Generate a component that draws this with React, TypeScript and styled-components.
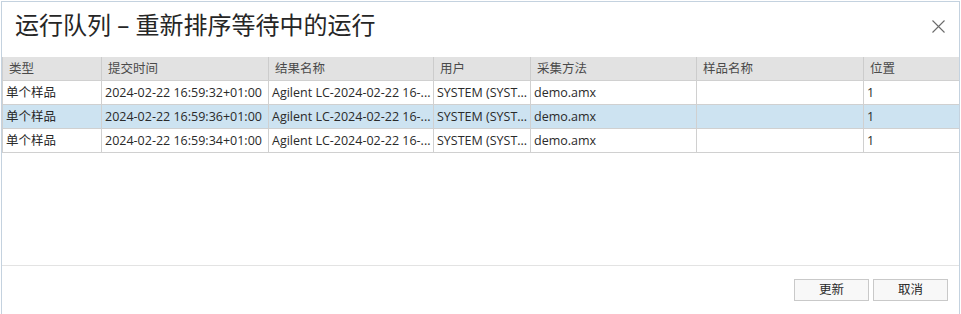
import React from "react";
import styled, { createGlobalStyle } from "styled-components";

const Global = createGlobalStyle`
  html, body { margin: 0; padding: 0; background: #ffffff; }
  body { font-family: "Open Sans", "Noto Sans CJK SC", sans-serif; overflow: hidden; }
  * { box-sizing: border-box; }
`;

const Dialog = styled.div`
  margin: 1px 0 0 1px;
  width: 959px;
  height: 313px;
  border: 1px solid #c4d2df;
  border-bottom: none;
  background: #ffffff;
  display: flex;
  flex-direction: column;
`;

const TitleBar = styled.div`
  height: 55px;
  display: flex;
  align-items: flex-start;
  justify-content: space-between;
  padding: 7px 14px 0 13px;
`;

const Title = styled.h1`
  margin: 0;
  font-size: 24px;
  font-weight: 400;
  line-height: 31px;
  color: #262626;
`;

const CloseButton = styled.button`
  margin-top: 10px;
  width: 14px;
  height: 14px;
  padding: 0;
  border: none;
  background: transparent;
  display: flex;
  align-items: center;
  justify-content: center;
`;

const TableArea = styled.div`
  height: 209px;
  border-bottom: 1px solid #e3e3e3;
  display: flex;
  flex-direction: column;
`;

const cols = "99px 167px 165px 97px 166px 167px 1fr";

const HeaderRow = styled.div`
  display: grid;
  grid-template-columns: ${cols};
  height: 24px;
  background: #e2e2e2;
  border-left: 1px solid #cfcfcf;
  border-bottom: 1px solid #d0d0d0;
`;

const HeaderCell = styled.div`
  padding-left: 6px;
  line-height: 23px;
  font-size: 12.5px;
  color: #4a4a4a;
  border-right: 1px solid #cccccc;
  white-space: nowrap;
  overflow: hidden;
  &:last-child { border-right: none; }
`;

const Row = styled.div<{ $selected?: boolean }>`
  display: grid;
  grid-template-columns: ${cols};
  height: 24px;
  background: ${(p) => (p.$selected ? "#cde3f1" : "#ffffff")};
  border-left: 1px solid #d0d0d0;
  border-bottom: 1px solid #d0d0d0;
`;

const Cell = styled.div`
  padding-left: 3px;
  line-height: 23px;
  font-size: 12.5px;
  color: #2a2a2a;
  border-right: 1px solid #d0d0d0;
  white-space: nowrap;
  overflow: hidden;
  &:last-child { border-right: none; }
`;

const Footer = styled.div`
  display: flex;
  justify-content: flex-end;
  gap: 4px;
  padding: 13px 11px 0 0;
`;

const Button = styled.button`
  width: 75px;
  height: 22px;
  padding: 0;
  border: 1px solid #c9c9c9;
  background: #f8f8f8;
  font-family: "Open Sans", "Noto Sans CJK SC", sans-serif;
  font-size: 12.5px;
  color: #2a2a2a;
  line-height: 20px;
`;

const headers = ["类型", "提交时间", "结果名称", "用户", "采集方法", "样品名称", "位置"];

const rows = [
  { time: "2024-02-22 16:59:32+01:00", selected: false },
  { time: "2024-02-22 16:59:36+01:00", selected: true },
  { time: "2024-02-22 16:59:34+01:00", selected: false },
];

export default function App() {
  return (
    <>
      <Global />
      <Dialog>
        <TitleBar>
          <Title>运行队列 – 重新排序等待中的运行</Title>
          <CloseButton aria-label="关闭">
            <svg width="13" height="13" viewBox="0 0 13 13">
              <path d="M0.5 0.5 L12.5 12.5 M12.5 0.5 L0.5 12.5" stroke="#6b6b6b" strokeWidth="1.1" fill="none" />
            </svg>
          </CloseButton>
        </TitleBar>
        <TableArea>
          <HeaderRow>
            {headers.map((h) => (
              <HeaderCell key={h}>{h}</HeaderCell>
            ))}
          </HeaderRow>
          {rows.map((r) => (
            <Row key={r.time} $selected={r.selected}>
              <Cell>单个样品</Cell>
              <Cell>{r.time}</Cell>
              <Cell>Agilent LC-2024-02-22 16-...</Cell>
              <Cell>SYSTEM (SYST...</Cell>
              <Cell>demo.amx</Cell>
              <Cell></Cell>
              <Cell>1</Cell>
            </Row>
          ))}
        </TableArea>
        <Footer>
          <Button>更新</Button>
          <Button>取消</Button>
        </Footer>
      </Dialog>
    </>
  );
}
